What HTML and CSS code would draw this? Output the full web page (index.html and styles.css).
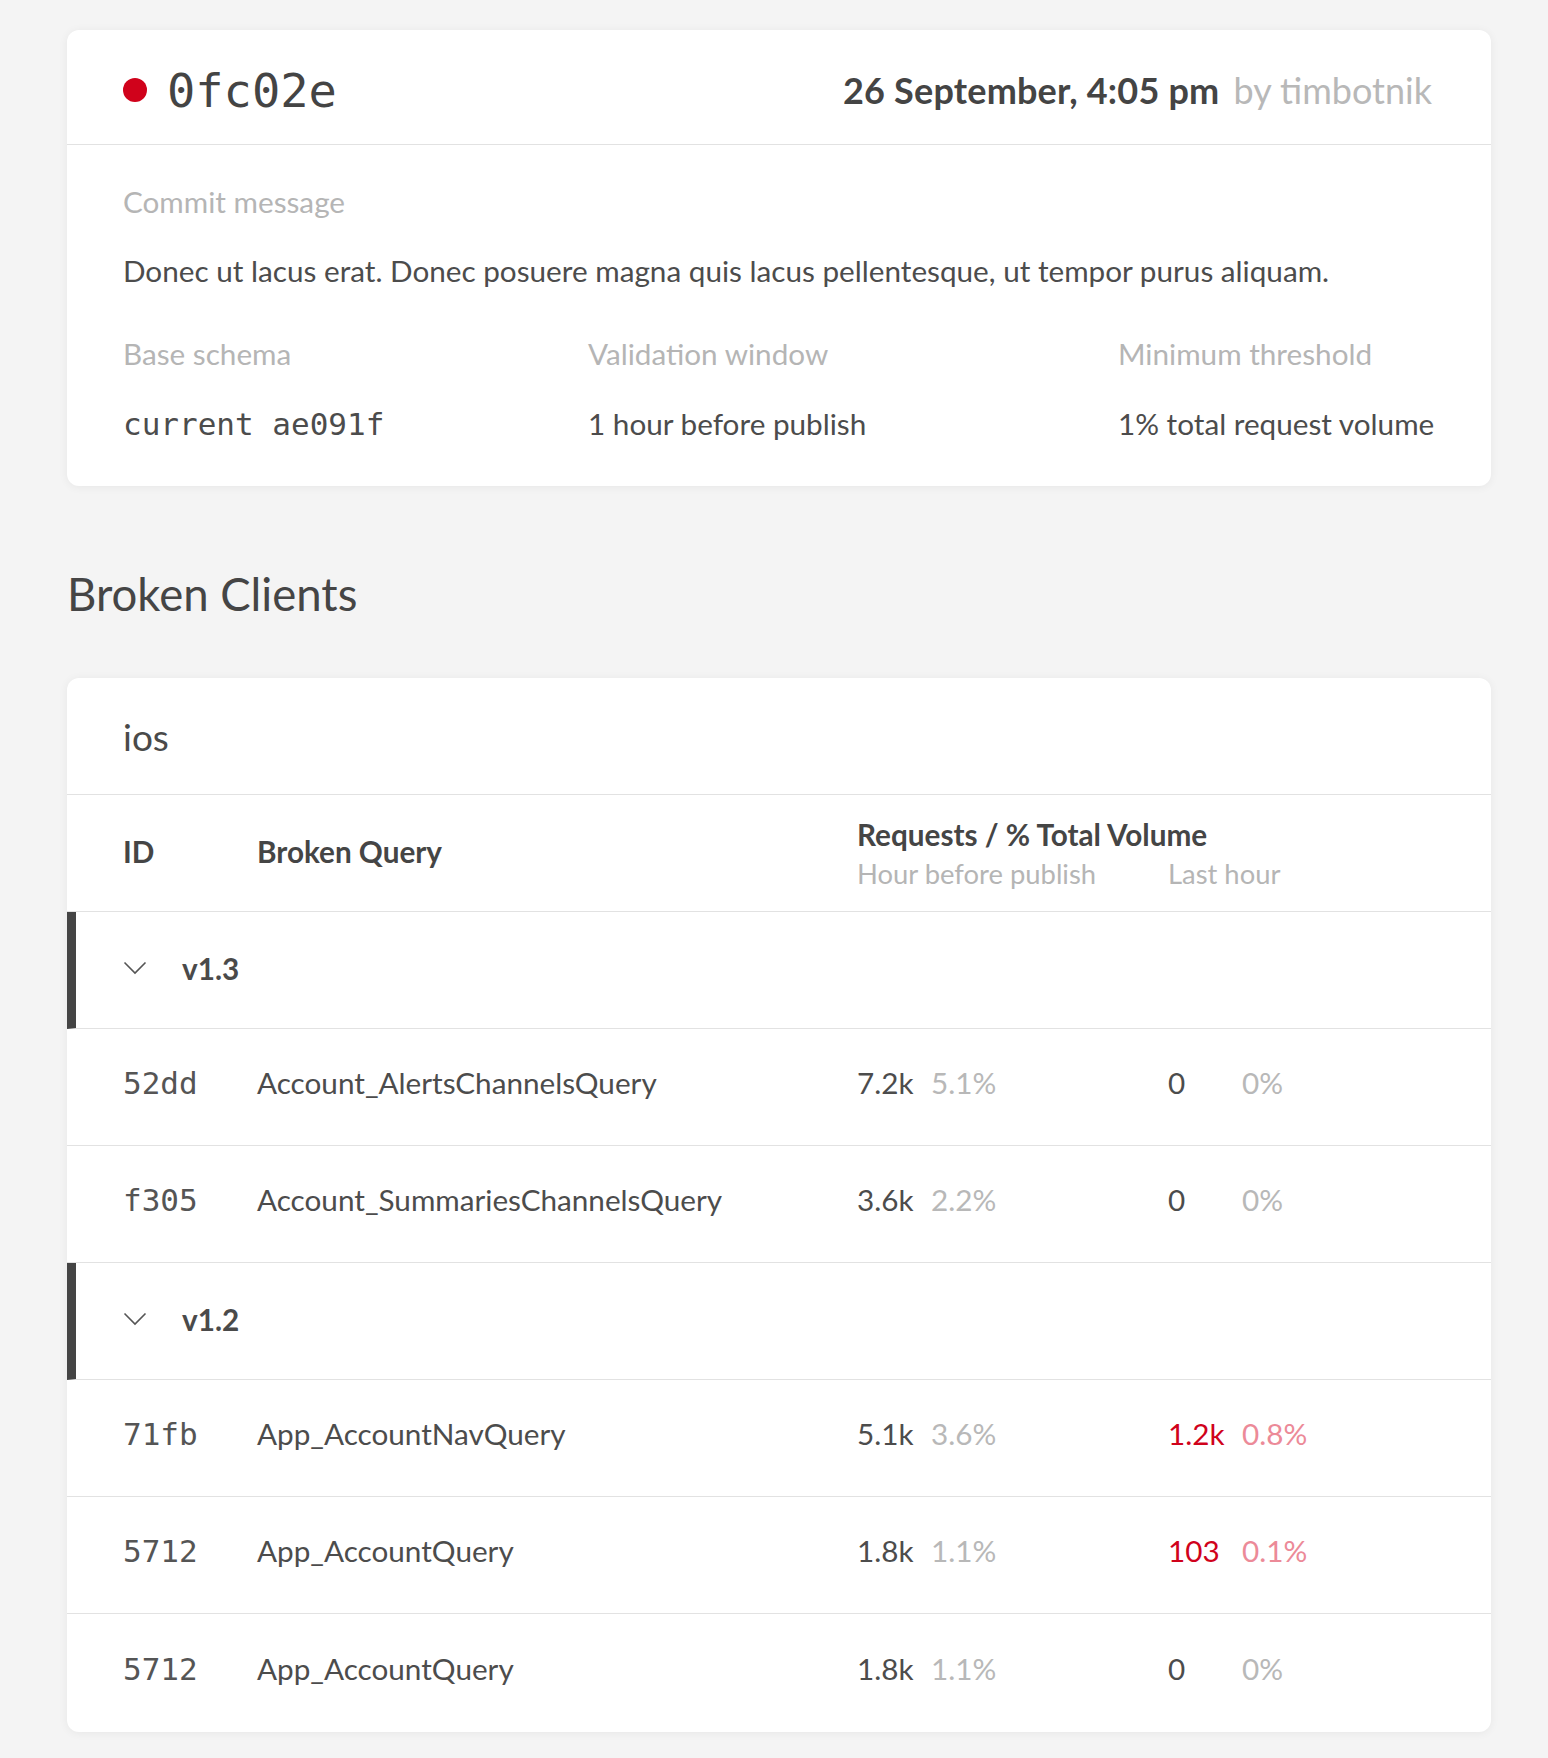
FILE: index.html
```html
<!DOCTYPE html>
<html lang="en">
<head>
<meta charset="utf-8">
<title>Commit 0fc02e</title>
<link rel="stylesheet" href="styles.css">
</head>
<body>
<main class="page">
  <section class="card commit">
    <header class="commit-head">
      <div class="commit-id">
        <span class="status-dot"></span>
        <span class="hash">0fc02e</span>
      </div>
      <div class="commit-meta">
        <span class="date">26 September, 4:05 pm</span>
        <span class="author">by timbotnik</span>
      </div>
    </header>
    <div class="commit-body">
      <div class="label">Commit message</div>
      <p class="message">Donec ut lacus erat. Donec posuere magna quis lacus pellentesque, ut tempor purus aliquam.</p>
      <div class="facts">
        <div class="fact">
          <div class="label">Base schema</div>
          <div class="value mono">current ae091f</div>
        </div>
        <div class="fact">
          <div class="label">Validation window</div>
          <div class="value">1 hour before publish</div>
        </div>
        <div class="fact">
          <div class="label">Minimum threshold</div>
          <div class="value">1% total request volume</div>
        </div>
      </div>
    </div>
  </section>

  <h2 class="section-title">Broken Clients</h2>

  <section class="card clients">
    <div class="client-name">ios</div>
    <div class="row head-row">
      <div class="th">ID</div>
      <div class="th">Broken Query</div>
      <div class="th-group">
        <div class="th">Requests / % Total Volume</div>
        <div class="sub">
          <span>Hour before publish</span>
          <span>Last hour</span>
        </div>
      </div>
    </div>

    <div class="group-row">
      <svg class="chevron" width="24" height="14" viewBox="0 0 24 14"><polyline points="1.5,1.5 12,12 22.5,1.5" fill="none" stroke="#555" stroke-width="1.6"/></svg>
      <span class="version">v1.3</span>
    </div>
    <div class="row data">
      <div class="mono id">52dd</div>
      <div class="query">Account_AlertsChannelsQuery</div>
      <div class="stat"><span class="num">7.2k</span><span class="pct">5.1%</span></div>
      <div class="stat"><span class="num">0</span><span class="pct">0%</span></div>
    </div>
    <div class="row data">
      <div class="mono id">f305</div>
      <div class="query">Account_SummariesChannelsQuery</div>
      <div class="stat"><span class="num">3.6k</span><span class="pct">2.2%</span></div>
      <div class="stat"><span class="num">0</span><span class="pct">0%</span></div>
    </div>

    <div class="group-row">
      <svg class="chevron" width="24" height="14" viewBox="0 0 24 14"><polyline points="1.5,1.5 12,12 22.5,1.5" fill="none" stroke="#555" stroke-width="1.6"/></svg>
      <span class="version">v1.2</span>
    </div>
    <div class="row data">
      <div class="mono id">71fb</div>
      <div class="query">App_AccountNavQuery</div>
      <div class="stat"><span class="num">5.1k</span><span class="pct">3.6%</span></div>
      <div class="stat alert"><span class="num">1.2k</span><span class="pct">0.8%</span></div>
    </div>
    <div class="row data">
      <div class="mono id">5712</div>
      <div class="query">App_AccountQuery</div>
      <div class="stat"><span class="num">1.8k</span><span class="pct">1.1%</span></div>
      <div class="stat alert"><span class="num">103</span><span class="pct">0.1%</span></div>
    </div>
    <div class="row data last">
      <div class="mono id">5712</div>
      <div class="query">App_AccountQuery</div>
      <div class="stat"><span class="num">1.8k</span><span class="pct">1.1%</span></div>
      <div class="stat"><span class="num">0</span><span class="pct">0%</span></div>
    </div>
  </section>
</main>
</body>
</html>
```

FILE: styles.css
```css
* { box-sizing: border-box; }

html, body {
  margin: 0;
  padding: 0;
  background: #f4f4f4;
}

body {
  font-family: Lato, "Open Sans", "Liberation Sans", sans-serif;
  font-size: 29.7px;
  color: #4c4c4c;
}

.page {
  width: 1548px;
  padding: 30px 57px 26px 67px;
}

.card {
  background: #fff;
  border-radius: 12px;
  box-shadow: 0 1px 10px rgba(0, 0, 0, 0.06);
  width: 1424px;
}

.mono {
  font-family: "DejaVu Sans Mono", "Liberation Mono", monospace;
}

/* commit card */
.commit-head {
  height: 115px;
  display: flex;
  align-items: center;
  justify-content: space-between;
  padding: 6px 59px 0 56px;
  border-bottom: 1px solid #e2e2e2;
}

.commit-id {
  display: flex;
  align-items: center;
}

.status-dot {
  width: 24px;
  height: 24px;
  border-radius: 50%;
  background: #d0021b;
  margin-right: 20px;
}

.hash {
  font-family: "DejaVu Sans Mono", "Liberation Mono", monospace;
  font-size: 47px;
  color: #444;
  line-height: 1;
}

.commit-meta {
  display: flex;
  align-items: baseline;
  gap: 14px;
  font-size: 36px;
}

.date {
  font-weight: 700;
  color: #444;
  letter-spacing: 0.2px;
}

.author {
  color: #b8b8b8;
}

.commit-body {
  padding: 37px 56px 42px;
}

.label {
  color: #b5b5b5;
  line-height: 40px;
}

.message {
  margin: 29px 0 43px;
  line-height: 40px;
}

.facts {
  display: grid;
  grid-template-columns: 465px 530px 1fr;
}

.value {
  line-height: 40px;
  margin-top: 30px;
}

.value.mono {
  font-size: 31px;
}

/* section title */
.section-title {
  margin: 78px 0 54px;
  font-size: 45.5px;
  line-height: 60px;
  font-weight: 400;
  color: #454545;
}

/* clients card */
.clients {
  overflow: hidden;
}

.client-name {
  height: 117px;
  display: flex;
  align-items: center;
  padding: 0 0 0 56px;
  font-size: 37px;
  color: #4a4a4a;
  border-bottom: 1px solid #e2e2e2;
}

.row {
  height: 117px;
  display: grid;
  grid-template-columns: 134px 600px 311px 1fr;
  align-items: center;
  padding-left: 56px;
  border-bottom: 1px solid #e2e2e2;
}

.row.head-row {
  padding-bottom: 2px;
}

.row.data {
  padding-bottom: 9px;
}

.row.last {
  border-bottom: none;
  height: 118px;
}

.th {
  font-weight: 700;
  color: #454545;
  line-height: 40px;
}

.th-group {
  grid-column: 3 / 5;
  padding-top: 4px;
}

.sub {
  display: grid;
  grid-template-columns: 311px 1fr;
  color: #b5b5b5;
  font-size: 27.4px;
  line-height: 38px;
}

.group-row {
  height: 117px;
  display: flex;
  align-items: center;
  padding: 0 0 4px 47px;
  border-left: 9px solid #444;
  border-bottom: 1px solid #e2e2e2;
}

.chevron {
  display: block;
  margin-right: 35px;
}

.version {
  font-weight: 700;
  color: #4a4a4a;
}

.id {
  font-size: 31px;
  color: #555;
}

.query {
  color: #4c4c4c;
}

.stat {
  display: flex;
  align-items: baseline;
}

.num {
  width: 74px;
  color: #4c4c4c;
}

.pct {
  color: #b8b8b8;
}

.stat.alert .num {
  color: #d0021b;
}

.stat.alert .pct {
  color: #ec8a98;
}
```
